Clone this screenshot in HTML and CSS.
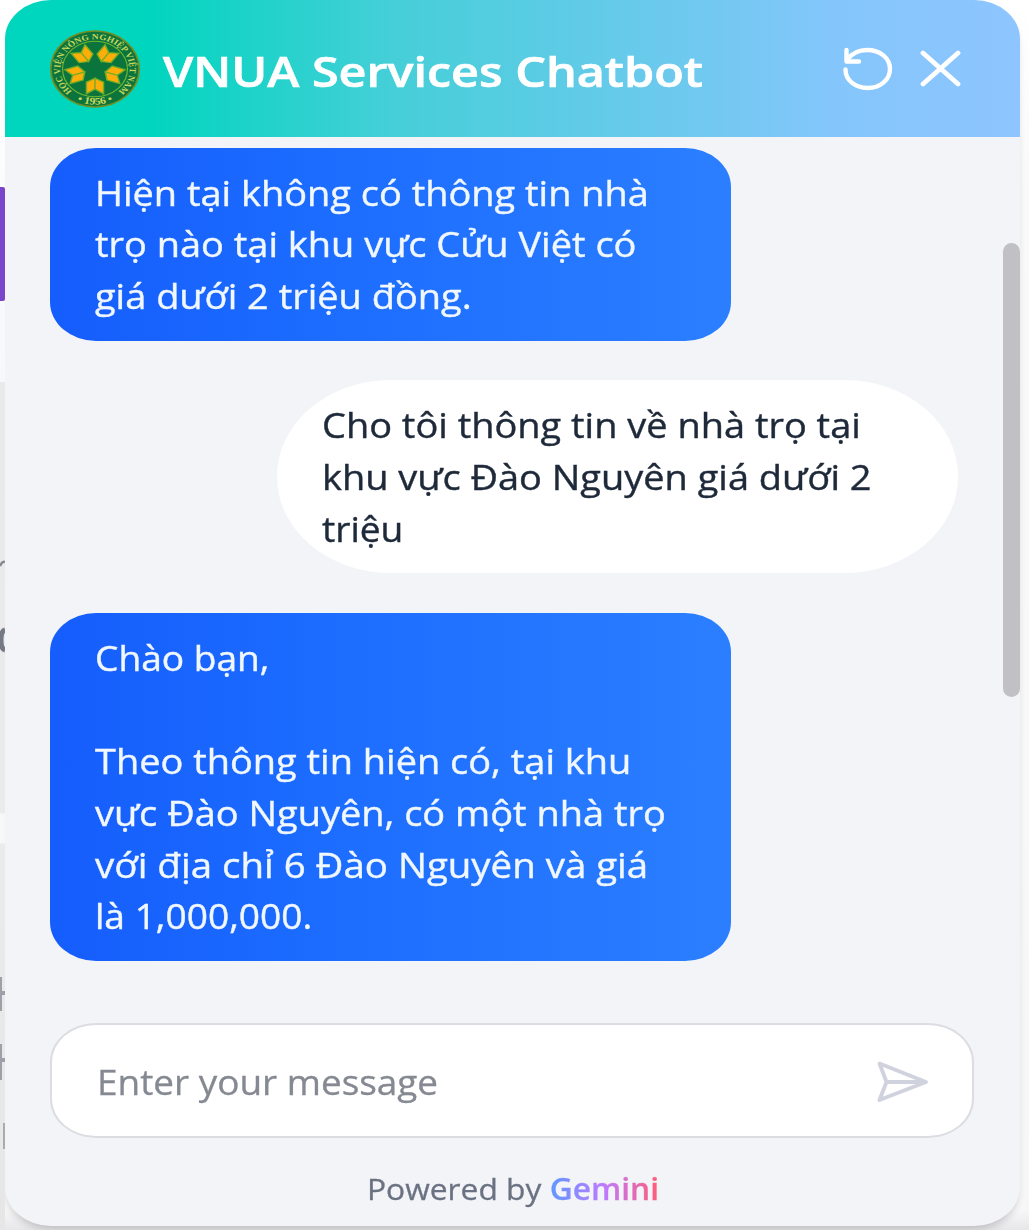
FILE: index.html
```html
<!DOCTYPE html>
<html lang="vi">
<head>
<meta charset="utf-8">
<title>VNUA Services Chatbot</title>
<link rel="stylesheet" href="styles.css">
</head>
<body>
<div class="page-edge">
  <i class="edge-button"></i>
  <svg class="edge-marks" width="5" height="1230" viewBox="0 0 5 1230" fill="none" stroke="#858891">
    <path d="M0 566Q2 561 5 562" stroke-width="2.5"/>
    <path d="M5 630Q1 631 1 640T5 650" stroke="#747984" stroke-width="5"/>
    <path d="M0 977V1011M0 993H5M0 1044V1080M0 1060H5" stroke-width="4" stroke="#9da0a9"/>
    <path d="M4 1123V1149" stroke-width="2" stroke="#aaaaaf"/>
  </svg>
</div>
<main class="chat">
  <header class="header">
    <svg class="logo" width="92" height="82" viewBox="-51 -53 102 106" preserveAspectRatio="none">
      <defs>
        <path id="ring" d="M-25.5 29A38.500 38.500 0 1 1 25.5 29"/>
        <path id="year-arc" d="M-28 36.5A46 46 0 0 0 28 36.5"/>
        <g id="petals"><path d="M0 12L-9.500 17V32L0 26ZM0 12L9.500 17V32L0 26Z"/></g>
      </defs>
      <circle r="49" fill="#0b743d" stroke="#718f20" stroke-width="2"/>
      <circle r="36" fill="none" stroke="#70b62e" stroke-width="1.3"/>
      <g fill="#ffad08" stroke="#70ae27" stroke-width="1.6">
        <use href="#petals"/><use href="#petals" transform="rotate(72)"/><use href="#petals" transform="rotate(144)"/><use href="#petals" transform="rotate(216)"/><use href="#petals" transform="rotate(288)"/>
      </g>
      <g class="logo-text">
        <text><textPath href="#ring" textLength="186" lengthAdjust="spacingAndGlyphs">HỌC VIỆN NÔNG NGHIỆP VIỆT NAM</textPath></text>
        <text class="year"><textPath href="#year-arc" startOffset="50%" text-anchor="middle">• 1956 •</textPath></text>
      </g>
    </svg>
    <h1 class="title"><span>VNUA Services Chatbot</span></h1>
    <svg class="restart" width="52" height="46" viewBox="0 0 52 46" fill="none" stroke="#fff" stroke-width="4.4" stroke-linecap="round" stroke-linejoin="round"><path d="M4.5 4V15.5H17"/><path d="M5 14C10 7 17 4 25 4C38 4 48 12 48 23S38 42 25.500 42C13 42 3.500 34 3.500 23.500"/></svg>
    <svg class="close" width="42" height="38" viewBox="0 0 42 38" fill="none" stroke="#fff" stroke-width="4.8" stroke-linecap="round"><path d="M3 3L38 34M38 3L3 34"/></svg>
  </header>
  <section class="messages">
    <div class="bubble bot"><span>Hiện tại không có thông tin nhà</span><span>trọ nào tại khu vực Cửu Việt có</span><span>giá dưới 2 triệu đồng.</span></div>
    <div class="bubble user"><span>Cho tôi thông tin về nhà trọ tại</span><span>khu vực Đào Nguyên giá dưới 2</span><span class="narrow">triệu</span></div>
    <div class="bubble bot"><span class="narrow">Chào bạn,</span><span>&nbsp;</span><span>Theo thông tin hiện có, tại khu</span><span>vực Đào Nguyên, có một nhà trọ</span><span class="wide">với địa chỉ 6 Đào Nguyên và giá</span><span class="narrow">là 1,000,000.</span></div>
    <i class="scroll-thumb"></i>
  </section>
  <div class="composer">
    <span class="placeholder">Enter your message</span>
    <svg width="54" height="44" viewBox="0 0 54 44" fill="none" stroke="#d0d3de" stroke-width="3.9" stroke-linejoin="round" stroke-linecap="round"><path d="M3.500 3.500L50 22L3.500 40L10.500 22ZM10.500 22H49"/></svg>
  </div>
  <footer class="footer"><span>Powered by <b>Gemini</b></span></footer>
</main>
</body>
</html>
```
FILE: styles.css
```css
* { box-sizing: border-box; }
body {
  margin: 0;
  width: 1029px;
  height: 1230px;
  overflow: hidden;
  display: flex;
  background: linear-gradient(#fff 0, #f9f9f9 200px, #f7f7f8 1210px, #e7e7ea 1230px);
  font-family: "Open Sans", "Noto Sans", sans-serif;
}
.page-edge {
  width: 5px;
  height: 1230px;
  position: relative;
  flex: none;
  background: linear-gradient(#fff 0, #f8f7fc 382px, #e9e9e9 382px, #ebebeb 813px, #f7f7f9 814px, #f7f7f9 843px, #ebebeb 844px, #e6e6e6 1230px);
}
.edge-button {
  position: absolute;
  top: 187px;
  left: 0;
  width: 5px;
  height: 114px;
  background: #7b45ca;
  border-radius: 0 2px 2px 0;
  filter: blur(.7px);
}
.edge-marks { position: absolute; left: 0; top: 0; }
.chat {
  width: 1015px;
  height: 1226px;
  display: flex;
  flex-direction: column;
  flex: none;
  overflow: hidden;
  border-radius: 46px / 39px;
  background: #f3f4f7;
  box-shadow: 0 6px 8px -3px #0003;
}
.header {
  height: 137px;
  flex: none;
  display: flex;
  align-items: center;
  padding: 0 56px 0 44px;
  background: linear-gradient(90deg, #00d5be 0, #00d5be 14%, #45cfd8 38%, #84c6fb 82%, #8ec5ff 100%);
}
.logo { flex: none; display: block; }
.logo-text { fill: #c9d75a; font: bold 10.5px "Liberation Serif", serif; }
.year { font-size: 13px; }
.title {
  margin: 4px 0 0 22px;
  width: 679px;
  font-size: 42px;
  line-height: 60px;
  font-weight: 600;
  color: #fff;
  white-space: nowrap;
  -webkit-text-stroke: .7px #fff;
}
.title span { display: inline-block; transform: scaleX(1.155); transform-origin: left; }
.restart { flex: none; }
.close { flex: none; margin-left: 26px; }
.messages {
  height: 824px;
  flex: none;
  position: relative;
  display: flex;
  flex-direction: column;
  gap: 39.500px;
  padding: 10.500px 62px 0 45px;
}
.bubble {
  width: 681px;
  flex: none;
  padding: 19.200px 45px 18.800px;
  font-size: 34.500px;
  line-height: 51.700px;
  white-space: nowrap;
  -webkit-text-stroke: .4px;
}
.bubble span { display: block; transform: scaleX(1.1); transform-origin: left; }
.bubble .narrow { transform: scaleX(1.076); }
.bubble .wide { transform: scaleX(1.114); }
.bot {
  color: #f0f7ff;
  background: linear-gradient(90deg, #155dfc, #1c6cff 40%, #2b7fff);
  border-radius: 46px / 39px;
}
.user {
  align-self: flex-end;
  color: #1e2939;
  background: #fff;
  border-radius: 114px / 96px;
}
.scroll-thumb {
  position: absolute;
  right: 0;
  top: 106px;
  width: 17px;
  height: 454px;
  border-radius: 9px;
  background: #c1c1c5;
}
.composer {
  width: 924px;
  height: 115px;
  flex: none;
  margin: 62px 0 0 45px;
  display: flex;
  justify-content: space-between;
  align-items: center;
  padding: 2px 42px 0 45px;
  border: 2px solid #dcdde3;
  border-radius: 46px / 39px;
  background: #fff;
}
.placeholder {
  font-size: 34.500px;
  color: #858992;
  white-space: nowrap;
  transform: scaleX(1.07);
  transform-origin: left;
  -webkit-text-stroke: .3px;
}
.footer {
  padding: 28px 0 0 362px;
  font-size: 30px;
  line-height: 46px;
  color: #6a7282;
  white-space: nowrap;
}
.footer span { display: inline-block; transform: scaleX(1.058); transform-origin: left; -webkit-text-stroke: .3px; }
.footer b {
  font-weight: 600;
  color: transparent;
  background: linear-gradient(90deg, #6097ff, #bd7aff 50%, #ff5d78);
  background-clip: text;
}
```
